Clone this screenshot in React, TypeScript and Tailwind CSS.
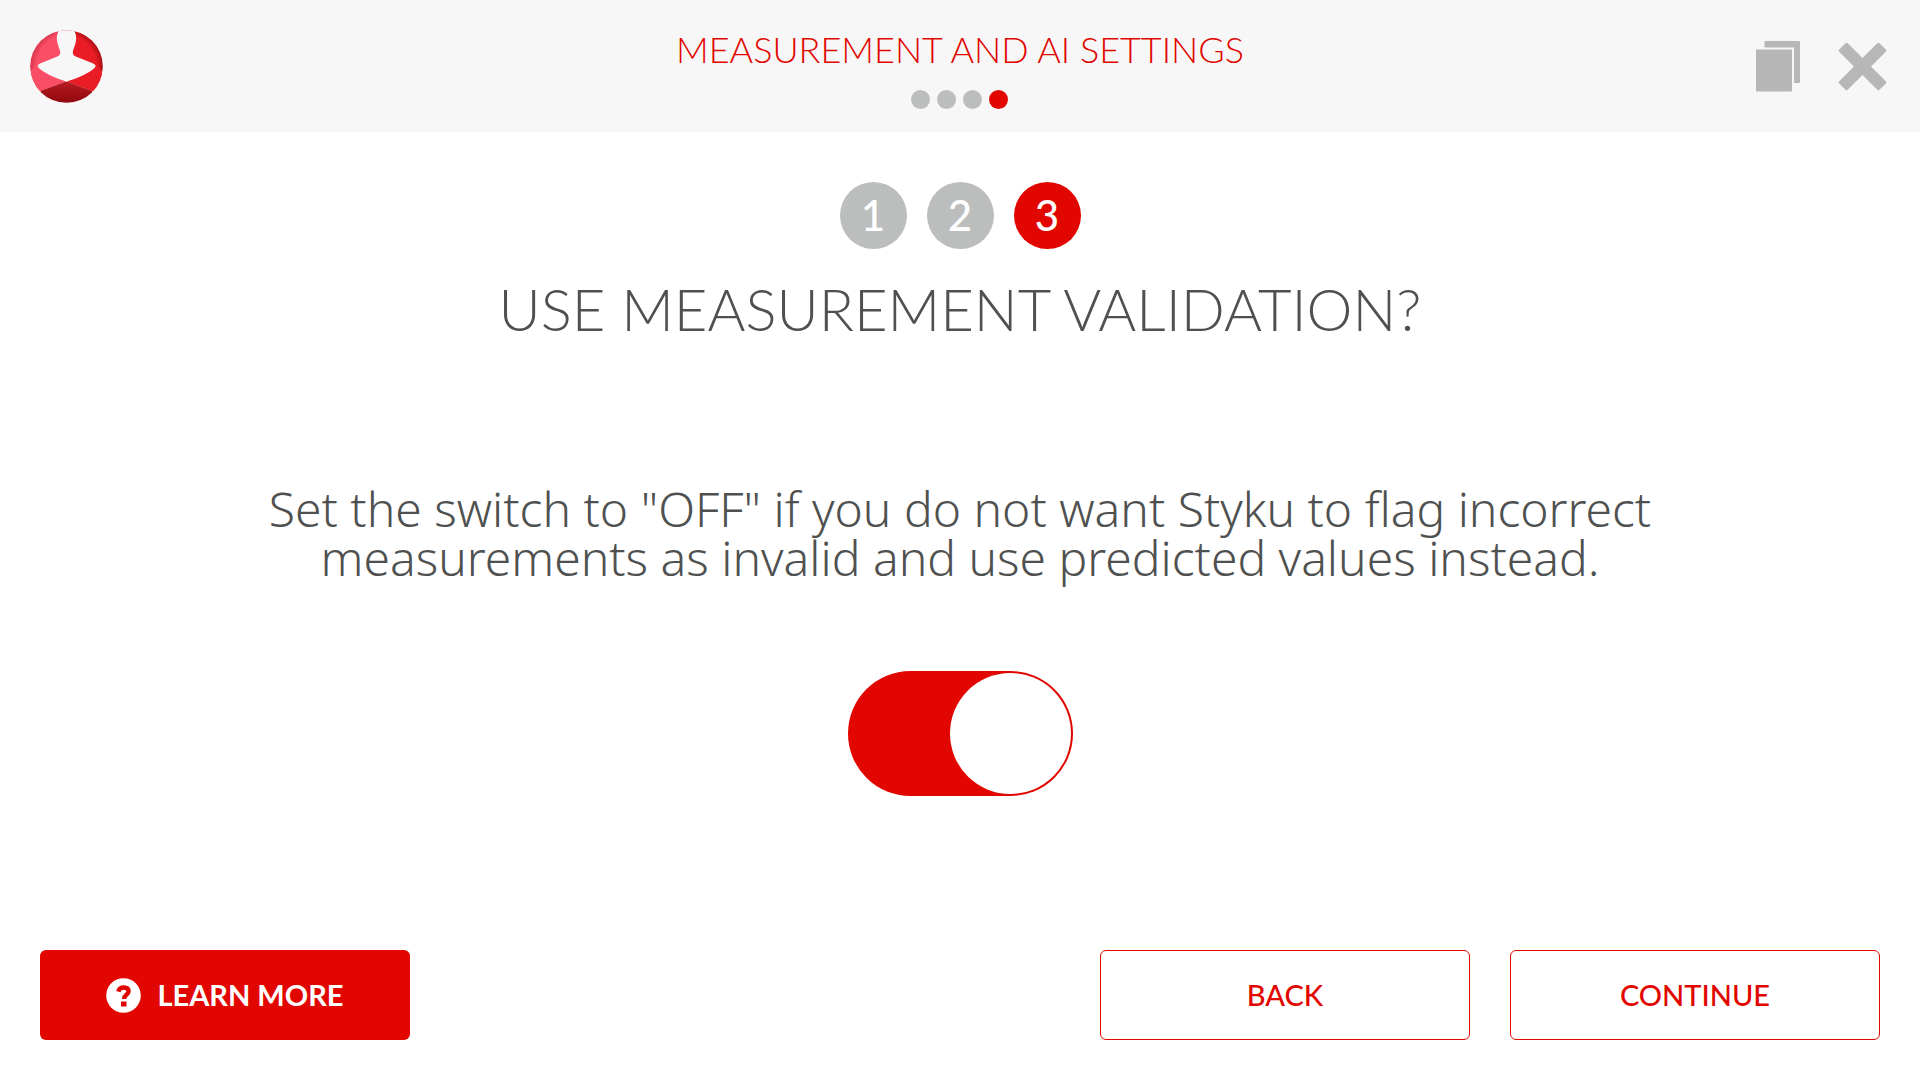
import React, { useState } from "react";

function Logo() {
  return (
    <svg viewBox="90 88 219 219" className="size-[73px]" aria-hidden="true">
      <defs>
        <clipPath id="disc">
          <circle cx="199.5" cy="197.5" r="109" />
        </clipPath>
        <linearGradient id="base" x1="0" y1="0" x2="0" y2="1">
          <stop offset="0" stopColor="#b81c22" />
          <stop offset="1" stopColor="#8e060c" />
        </linearGradient>
        <radialGradient id="pink" gradientUnits="userSpaceOnUse" cx="210" cy="200" r="120">
          <stop offset="0.84" stopColor="#fa4d66" />
          <stop offset="1" stopColor="#d8354a" />
        </radialGradient>
        <radialGradient id="red" gradientUnits="userSpaceOnUse" cx="189" cy="200" r="120">
          <stop offset="0.84" stopColor="#ea1c26" />
          <stop offset="1" stopColor="#a80d14" />
        </radialGradient>
      </defs>
      <g clipPath="url(#disc)">
        <rect x="90" y="88" width="110" height="125" fill="url(#pink)" />
        <rect x="199" y="88" width="110" height="125" fill="url(#red)" />
        <path d="M90 222 Q96 200 116 192 L200 242 L122 272 L90 272Z" fill="#fa4d66" />
        <path d="M309 222 Q303 200 283 192 L199 242 L277 272 L309 272Z" fill="#ea1c26" />
        <path d="M199.5 242 L276 271 L276 310 L122 310 L122 271Z" fill="url(#base)" />
        <path
          d="M178 86 C166 108 170 124 179 147 C183 158 180 165 168 169 L122 188 C111 193 111 198 119 204 C138 220 168 232 199.500 243 C231 232 262 220 281 204 C289 198 289 193 278 188 L231 169 C219 165 216 158 220 147 C229 124 233 108 221 86Z"
          fill="#f7f7f7"
        />
      </g>
    </svg>
  );
}

function CopyIcon() {
  return (
    <svg viewBox="0 0 44 51" className="h-[51px] w-11" fill="#b7b7b7" aria-hidden="true">
      <path d="M9 0H43a1 1 0 0 1 1 1V41a1 1 0 0 1-1 1H38V6.500H8.500V0.500Z" />
      <rect y="8.500" width="36" height="42" rx="0.500" />
    </svg>
  );
}

function CloseIcon() {
  return (
    <svg viewBox="0 0 49 49" className="size-[49px]" fill="#b7b7b7" aria-hidden="true">
      <g transform="rotate(45 24.500 24.500)">
        <rect x="-4" y="18.500" width="57" height="12" rx="1.500" />
        <rect x="18.500" y="-4" width="12" height="57" rx="1.500" />
      </g>
    </svg>
  );
}

function HelpIcon() {
  return (
    <svg viewBox="0 0 35 35" className="size-[35px]" aria-hidden="true">
      <circle cx="17.500" cy="17.500" r="17.300" fill="#fff" />
      <path
        d="M12.300 13.600 C13 10.800 15 9.500 17.800 9.500 C21.200 9.500 22.600 11.300 22.600 13.300 C22.600 16.500 18 17 18 21"
        fill="none"
        stroke="#e10600"
        strokeWidth="4.400"
      />
      <rect x="15" y="23.500" width="5.500" height="5" fill="#e10600" />
    </svg>
  );
}

const pages = [1, 2, 3, 4];
const steps = [1, 2, 3];

function Header() {
  return (
    <header className="grid h-[132px] grid-cols-[1fr_auto_1fr] items-center bg-[#f7f7f7] px-[30px]">
      <a href="#" aria-label="Home" className="flex">
        <Logo />
      </a>
      <div className="flex flex-col items-center gap-[21px] pt-1.5">
        <h1 className="text-4xl font-light text-[#e10600]">
          MEASUREMENT AND AI SETTINGS
        </h1>
        <div className="flex gap-[7px]">
          {pages.map((page) => (
            <span
              key={page}
              className={`size-[19px] rounded-full ${
                page === 4 ? "bg-[#e10600]" : "bg-[#bcbebd]"
              }`}
            />
          ))}
        </div>
      </div>
      <div className="flex items-center justify-end gap-[38px] pr-[3px]">
        <button type="button" aria-label="Copy" className="cursor-pointer">
          <CopyIcon />
        </button>
        <button type="button" aria-label="Close" className="cursor-pointer">
          <CloseIcon />
        </button>
      </div>
    </header>
  );
}

function App() {
  const [enabled, setEnabled] = useState(true);
  return (
    <div className="flex min-h-screen flex-col bg-white font-['Lato',sans-serif] text-[#4f5150]">
      <Header />
      <main className="flex flex-1 flex-col items-center pt-[50px]">
        <ol className="flex gap-5">
          {steps.map((step) => (
            <li
              key={step}
              className={`flex size-[67px] items-center justify-center rounded-full text-[42px] font-medium text-white ${
                step === 3 ? "bg-[#e10600]" : "bg-[#bcbebd]"
              }`}
            >
              {step}
            </li>
          ))}
        </ol>
        <h2 className="mt-6 text-[58px] font-light leading-[72px]">
          USE MEASUREMENT VALIDATION?
        </h2>
        <p
          id="validation-text"
          className="mt-[139px] max-w-[1520px] text-center font-['Noto_Sans',sans-serif] text-5xl font-light leading-[49px]"
        >
          Set the switch to "OFF" if you do not want Styku to flag incorrect
          measurements as invalid and use predicted values instead.
        </p>
        <label className="mt-[89px] flex h-[125px] w-[225px] cursor-pointer justify-start rounded-full bg-[#bcbebd] p-0.5 has-checked:justify-end has-checked:bg-[#e10600]">
          <input
            type="checkbox"
            role="switch"
            aria-labelledby="validation-text"
            className="sr-only"
            checked={enabled}
            onChange={() => setEnabled(!enabled)}
          />
          <span className="size-[121px] rounded-full bg-white" />
        </label>
      </main>
      <footer className="flex gap-10 p-10 text-[29px] font-medium">
        <button
          type="button"
          className="mr-auto flex h-[90px] w-[370px] cursor-pointer items-center justify-center gap-4 rounded-md bg-[#e10600] font-bold text-white"
        >
          <HelpIcon />
          LEARN MORE
        </button>
        <button
          type="button"
          className="h-[90px] w-[370px] cursor-pointer rounded-md border border-[#e10600] text-[#e10600]"
        >
          BACK
        </button>
        <button
          type="button"
          className="h-[90px] w-[370px] cursor-pointer rounded-md border border-[#e10600] text-[#e10600]"
        >
          CONTINUE
        </button>
      </footer>
    </div>
  );
}

export default App;
